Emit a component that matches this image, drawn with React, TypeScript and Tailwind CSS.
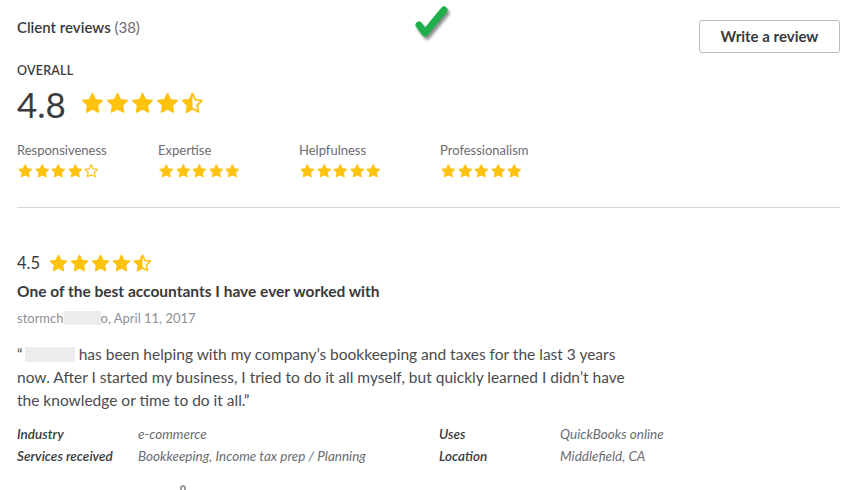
import React from "react";

const STAR =
  "M12 2.6l2.8 5.9 6.4.8-4.7 4.4 1.2 6.4L12 17l-5.7 3.1 1.2-6.4-4.7-4.4 6.4-.8z";

function Star({ kind, size }: { kind: "full" | "half" | "empty"; size: number }) {
  const id = React.useId();
  return (
    <svg width={size} height={size} viewBox="0 0 24 24" className="shrink-0">
      <defs>
        <clipPath id={id}>
          <rect x="0" y="0" width="12" height="24" />
        </clipPath>
      </defs>
      {kind === "full" && (
        <path d={STAR} fill="#ffc20e" stroke="#ffc20e" strokeWidth="1.6" strokeLinejoin="round" />
      )}
      {kind !== "full" && (
        <path d={STAR} fill="none" stroke="#ffc20e" strokeWidth="1.8" strokeLinejoin="round" />
      )}
      {kind === "half" && (
        <path
          d={STAR}
          fill="#ffc20e"
          stroke="#ffc20e"
          strokeWidth="1.6"
          strokeLinejoin="round"
          clipPath={`url(#${id})`}
        />
      )}
    </svg>
  );
}

function Stars({ value, size, gap }: { value: number; size: number; gap: string }) {
  return (
    <div className={`flex items-center ${gap}`}>
      {[1, 2, 3, 4, 5].map((i) => (
        <Star
          key={i}
          size={size}
          kind={value >= i ? "full" : value >= i - 0.5 ? "half" : "empty"}
        />
      ))}
    </div>
  );
}

function Check() {
  return (
    <svg
      width="38"
      height="38"
      viewBox="0 0 38 38"
      className="absolute left-[411px] top-[2px] drop-shadow-[2px_3px_1.5px_rgba(0,0,0,0.45)]"
    >
      <path
        d="M8 23 L14 31 L33 8"
        fill="none"
        stroke="#1fae4a"
        strokeWidth="7"
        strokeLinecap="round"
        strokeLinejoin="round"
      />
    </svg>
  );
}

const categories = [
  { label: "Responsiveness", value: 4 },
  { label: "Expertise", value: 5 },
  { label: "Helpfulness", value: 5 },
  { label: "Professionalism", value: 5 },
];

export default function App() {
  return (
    <div
      className="relative w-[855px] h-[490px] overflow-hidden bg-white pl-[17px] pr-[15px] text-[#393a3d]"
      style={{ fontFamily: "Lato, 'Open Sans', sans-serif" }}
    >
      <Check />

      {/* Header */}
      <div className="flex items-start justify-between pt-[20px]">
        <h2 className="mt-[-4px] text-[15px] font-semibold">
          Client reviews <span className="font-normal text-[#6b6c72]">(38)</span>
        </h2>
        <button className="h-[33px] w-[141px] rounded-[3px] border border-[#b8b9bc] text-[15px] font-bold text-[#393a3d]">
          Write a review
        </button>
      </div>

      {/* Overall */}
      <div className="mt-[9px] text-[12.5px] font-semibold tracking-[0.2px]">OVERALL</div>
      <div className="mt-[3px] flex items-center gap-[14px]">
        <span className="text-[35px] leading-[40px] font-normal text-[#393a3d]">4.8</span>
        <Stars value={4.5} size={25} gap="gap-0" />
      </div>

      <div className="mt-[18px] grid grid-cols-[141px_141px_141px_141px]">
        {categories.map((c) => (
          <div key={c.label} className="flex flex-col gap-[4px]">
            <span className="text-[13px] leading-[17px] text-[#6b6c72]">{c.label}</span>
            <Stars value={c.value} size={16.5} gap="gap-0" />
          </div>
        ))}
      </div>

      <div className="mt-[28px] h-px bg-[#d4d7dc]" />

      {/* Review */}
      <div className="mt-[44px] flex items-center gap-[8px]">
        <span className="text-[16.5px] leading-[22px] text-[#393a3d]">4.5</span>
        <Stars value={4.5} size={21} gap="gap-0" />
      </div>
      <h3 className="mt-[7px] text-[15.5px] leading-[20px] font-bold text-[#393a3d]">
        One of the best accountants I have ever worked with
      </h3>
      <div className="mt-[8px] flex items-center text-[13px] leading-[18px] text-[#8d9096]">
        <span>stormch</span>
        <span className="inline-block h-[14px] w-[37px] bg-[#ececee]" />
        <span>o, April 11, 2017</span>
      </div>

      <p className="mt-[16px] w-[630px] text-[15.5px] leading-[23px] text-[#4a4b4f]">
        <span>“</span>
        <span className="ml-[2px] mr-[4px] inline-block h-[15px] w-[50px] align-[-2px] bg-[#ececee]" />
        has been helping with my company’s bookkeeping and taxes for the last 3 years now. After I
        started my business, I tried to do it all myself, but quickly learned I didn’t have the
        knowledge or time to do it all.”
      </p>

      {/* Details */}
      <div className="mt-[11px] grid grid-cols-[121px_301px_121px_1fr] text-[13.5px] leading-[22px] italic">
        <span className="font-semibold text-[#393a3d]">Industry</span>
        <span className="text-[#6b6c72]">e-commerce</span>
        <span className="font-semibold text-[#393a3d]">Uses</span>
        <span className="text-[#6b6c72]">QuickBooks online</span>
        <span className="font-semibold text-[#393a3d]">Services received</span>
        <span className="text-[#6b6c72]">Bookkeeping, Income tax prep / Planning</span>
        <span className="font-semibold text-[#393a3d]">Location</span>
        <span className="text-[#6b6c72]">Middlefield, CA</span>
      </div>

      <div className="absolute left-[180px] top-[485px] h-[8px] w-[6px] rounded-t-full border-2 border-[#9a9ca0]" />
    </div>
  );
}
